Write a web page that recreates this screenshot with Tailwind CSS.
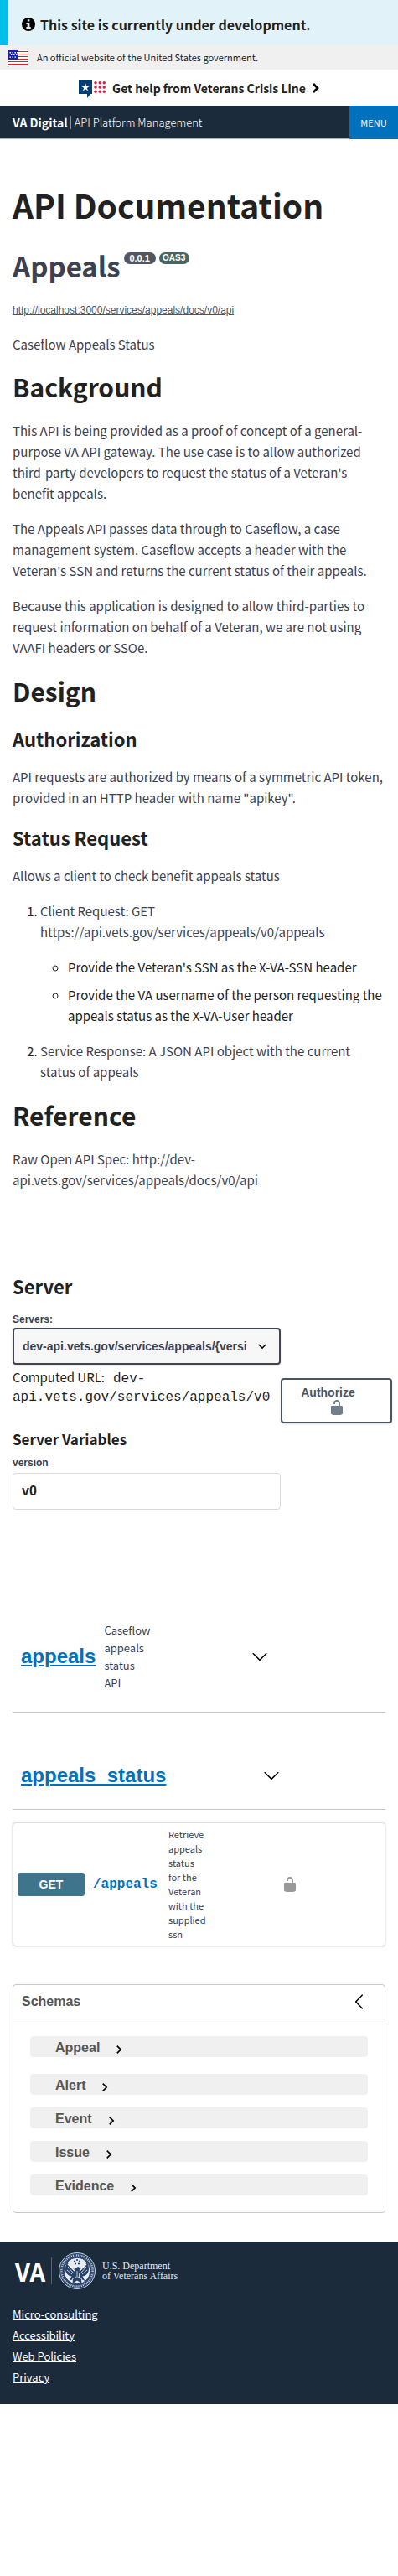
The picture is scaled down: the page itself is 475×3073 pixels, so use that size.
<!DOCTYPE html>
<html lang="en">
<head>
<meta charset="utf-8">
<meta name="viewport" content="width=device-width, initial-scale=1">
<title>API Documentation - VA Digital</title>
<script src="https://cdn.jsdelivr.net/npm/@tailwindcss/browser@4"></script>
</head>
<body class="bg-white font-['Noto_Sans_CJK_JP',sans-serif] text-[15px] leading-[25px] text-[#212121]">

<svg class="hidden" aria-hidden="true">
  <symbol id="unlocked" viewBox="0 0 20 20"><path fill="currentColor" d="M15.8 8H14V5.6C14 2.703 12.665 1 10 1 7.334 1 6 2.703 6 5.6V6h2v-.801C8 3.754 8.797 3 10 3c1.203 0 2 .754 2 2.199V8H4c-.553 0-1 .646-1 1.199V17c0 .549.428 1.139.951 1.307l1.197.387C5.672 18.861 6.55 19 7.1 19h5.8c.549 0 1.428-.139 1.951-.307l1.196-.387c.524-.167.953-.757.953-1.306V9.199C17 8.646 16.352 8 15.8 8z"/></symbol>
  <symbol id="arrow-down" viewBox="0 0 20 20"><path d="M17.418 6.109c.272-.268.709-.268.979 0s.271.701 0 .969l-7.908 7.83c-.27.268-.707.268-.979 0l-7.908-7.83c-.27-.268-.27-.701 0-.969.271-.268.709-.268.979 0L10 13.25l7.418-7.141z"/></symbol>
  <symbol id="chevron" viewBox="0 0 24 24"><path d="M10 6L8.59 7.41 13.17 12l-4.58 4.59L10 18l6-6z"/></symbol>
  <symbol id="star" viewBox="0 0 10 10"><path d="M5 0l1.2 3.6H10L6.9 5.9 8.1 9.6 5 7.3 1.9 9.6l1.2-3.7L0 3.6h3.8z"/></symbol>
</svg>

<div class="flex h-[54px] items-center gap-1.5 border-l-10 border-[#02bfe7] bg-[#e1f3f8] pt-1 pl-4">
  <svg class="size-4 shrink-0" viewBox="0 0 16 16" aria-hidden="true"><circle cx="8" cy="8" r="8"/><path fill="#e1f3f8" d="M6.8 2.2h2.6v2.4H6.8zM5.4 6h4v5h1.3v2H5.4v-2h1.3V8H5.4z"/></svg>
  <p class="text-base font-bold">This site is currently under development.</p>
</div>

<div class="flex h-[29px] items-center gap-2.5 bg-[#f0f0f0] pl-2.5">
  <svg class="h-[18px] w-6 shrink-0" viewBox="0 0 24 18" aria-label="U.S. flag">
    <path fill="#fff" d="M0 0h24v18H0z"/>
    <path fill="#e31c1c" d="M0 1h24v1H0zM0 4h24v1H0zM0 7h24v1H0zM0 10h24v1H0zM0 13h24v1H0zM0 16h24v1.2H0z"/>
    <path fill="#1d1fa8" d="M0 0h12v11H0z"/>
    <g fill="#fff"><path d="M1.5 2h1.5v1.5H1.5zM4.5 2H6v1.5H4.5zM7.5 2H9v1.5H7.5zM10 2h1.2v1.5H10zM3 4.7h1.5v1.4H3zM6 4.7h1.5v1.4H6zM9 4.7h1.5v1.4H9zM1.5 7.4h1.5v1.4H1.5zM4.5 7.4H6v1.4H4.5zM7.5 7.4H9v1.4H7.5z"/></g>
  </svg>
  <p class="text-[11px]">An official website of the United States government.</p>
</div>

<button type="button" class="flex h-[43px] w-full items-center justify-center gap-2 font-bold">
  <svg class="mt-1 h-[21px] w-8" viewBox="0 0 32 21" aria-hidden="true">
    <path fill="#003e73" d="M0 0h16v16h-2l-4 5v-5H0z"/>
    <use href="#star" x="3" y="3" width="10" height="10" fill="#fff"/>
    <g fill="#e31c3d"><circle cx="20" cy="2.7" r="1.7"/><circle cx="25.2" cy="2.7" r="1.7"/><circle cx="30.3" cy="2.7" r="1.7"/><circle cx="20" cy="8" r="1.7"/><circle cx="25.2" cy="8" r="1.7"/><circle cx="30.3" cy="8" r="1.7"/><circle cx="20" cy="13.2" r="1.7"/><circle cx="25.2" cy="13.2" r="1.7"/><circle cx="30.3" cy="13.2" r="1.7"/></g>
  </svg>
  <span class="text-sm">Get help from Veterans Crisis Line</span>
  <svg class="h-3 w-2" viewBox="0 0 8 12" aria-hidden="true"><path fill="none" stroke="#000" stroke-width="2.6" d="M1 1l5 5-5 5"/></svg>
</button>

<header class="flex h-10 bg-[#1b2b3c] text-white">
  <div class="flex flex-1 items-center border-b border-[#aeb0b5] pl-[15px]">
    <a href="#" class="text-sm font-bold">VA Digital</a>
    <span class="mr-1 ml-[3px] h-4 w-px bg-[#8b929b]"></span>
    <span class="text-[13px] font-light">API Platform Management</span>
  </div>
  <button type="button" class="w-[58px] bg-[#0071bc] text-[11px]">MENU</button>
</header>

<main class="px-[15px] pt-[55px]">
  <h1 class="text-[39px] leading-[46px] font-bold">API Documentation</h1>

  <div class="mt-[30px] flex items-start gap-1 text-[#3b4151]">
    <h2 class="text-[33px] leading-10 font-bold">Appeals</h2>
    <span class="mt-1 h-3.5 w-[38px] rounded-full bg-[#4f5862] text-center font-['Liberation_Sans',sans-serif] text-[11px] leading-3.5 font-bold text-white">0.0.1</span>
    <span class="mt-1 h-3.5 w-9 rounded-full bg-[#47665f] text-center font-['Liberation_Sans',sans-serif] text-[10px] leading-3.5 font-bold text-white">OAS3</span>
  </div>
  <a href="#" class="mt-[25px] block font-['Liberation_Sans',sans-serif] text-xs leading-4 text-[#4a5560] underline">http://localhost:3000/services/appeals/docs/v0/api</a>

  <div class="text-[#3b4151]">
    <p class="mt-5">Caseflow Appeals Status</p>
    <h2 class="mt-5 text-3xl leading-9 font-bold text-[#212121]">Background</h2>
    <p class="mt-[22px]">This API is being provided as a proof of concept of a general-purpose VA API gateway. The use case is to allow authorized third-party developers to request the status of a Veteran's benefit appeals.</p>
    <p class="mt-[17px]">The Appeals API passes data through to Caseflow, a case management system. Caseflow accepts a header with the Veteran's SSN and returns the current status of their appeals.</p>
    <p class="mt-[17px]">Because this application is designed to allow third-parties to request information on behalf of a Veteran, we are not using VAAFI headers or SSOe.</p>
    <h2 class="mt-[21px] text-3xl leading-9 font-bold text-[#212121]">Design</h2>
    <h3 class="mt-[25px] text-[22px] leading-7 font-bold text-[#212121]">Authorization</h3>
    <p class="mt-[19px] -mr-1">API requests are authorized by means of a symmetric API token, provided in an HTTP header with name "apikey".</p>
    <h3 class="mt-[21px] text-[22px] leading-7 font-bold text-[#212121]">Status Request</h3>
    <p class="mt-[19px]">Allows a client to check benefit appeals status</p>
    <ol class="mt-[17px] list-decimal pl-[33px] marker:text-[#212121]">
      <li>
        <p>Client Request: GET https://api.vets.gov/services/appeals/v0/appeals</p>
        <ul class="my-[17px] list-[circle] space-y-2 pl-[33px] text-[#212121]">
          <li>Provide the Veteran's SSN as the X-VA-SSN header</li>
          <li>Provide the VA username of the person requesting the appeals status as the X-VA-User header</li>
        </ul>
      </li>
      <li><p>Service Response: A JSON API object with the current status of appeals</p></li>
    </ol>
    <h2 class="mt-[21px] text-3xl leading-9 font-bold text-[#212121]">Reference</h2>
    <p class="mt-[22px]">Raw Open API Spec: http://dev-api.vets.gov/services/appeals/docs/v0/api</p>
  </div>

  <section class="mt-[100px] -mr-2 flex items-center">
    <div class="w-80 shrink-0">
      <h3 class="text-[22px] leading-7 font-bold">Server</h3>
      <label for="servers" class="mt-[18px] block font-['Liberation_Sans',sans-serif] text-xs leading-4 font-bold text-[#3b4151]">Servers:</label>
      <div class="relative mt-0.5">
        <select id="servers" class="block h-11 w-full appearance-none rounded border-2 border-[#41444e] bg-[#f7f7f7] pr-10 pl-2.5 font-['Liberation_Sans',sans-serif] text-sm font-bold text-[#3b4151] shadow-sm">
          <option>dev-api.vets.gov/services/appeals/{version}</option>
        </select>
        <svg class="pointer-events-none absolute top-3 right-3 size-5" viewBox="0 0 20 20" aria-hidden="true"><path d="M13.418 7.859a.695.695 0 0 1 .978 0 .68.68 0 0 1 0 .969l-3.908 3.83a.697.697 0 0 1-.979 0l-3.908-3.83a.68.68 0 0 1 0-.969.695.695 0 0 1 .978 0L10 11l3.418-3.141z"/></svg>
      </div>
      <p class="mt-1 leading-[22px]">Computed URL:<code class="pl-2.5 font-['Liberation_Mono',monospace] text-base leading-none">dev-api.vets.gov/services/appeals/v0</code></p>
      <h4 class="mt-[30px] text-[17px] leading-[22px] font-bold">Server Variables</h4>
      <label for="version" class="mt-[9px] block font-['Liberation_Sans',sans-serif] text-xs leading-4 font-bold text-[#3b4151]">version</label>
      <input id="version" type="text" value="v0" class="mt-1 block h-11 w-full rounded border border-[#d9d9d9] bg-white px-2.5 font-['Liberation_Sans',sans-serif] text-base font-bold">
    </div>
    <button type="button" class="mt-5 flex h-[54px] flex-1 flex-col items-center justify-center rounded border-2 border-[#4a5560] bg-white font-['Liberation_Sans',sans-serif] text-sm leading-4 font-bold text-[#4a5560] shadow-sm">
      <span class="pr-5">Authorize</span>
      <svg class="size-5 text-[#707f8a]" aria-hidden="true"><use href="#unlocked"/></svg>
    </button>
  </section>

  <section class="mt-[109px]">
    <div class="flex h-[133px] items-center border-b border-[#c4c6ce] pl-2.5">
      <div class="flex w-[275px] items-center gap-2.5">
        <a href="#" class="font-['Liberation_Sans',sans-serif] text-2xl leading-7 font-bold text-[#0071bc] underline">appeals</a>
        <p class="w-14 text-[13px] leading-[21px] text-[#3b4151]">Caseflow appeals status API</p>
      </div>
      <button type="button" aria-label="Expand appeals"><svg class="block size-5"><use href="#arrow-down"/></svg></button>
    </div>
    <div class="mt-[35px] flex h-[81px] items-center border-b border-[#c4c6ce] pl-2.5">
      <div class="w-[289px]">
        <a href="#" class="font-['Liberation_Sans',sans-serif] text-2xl leading-7 font-bold text-[#0071bc] underline">appeals_status</a>
      </div>
      <button type="button" aria-label="Collapse appeals_status"><svg class="block size-5"><use href="#arrow-down"/></svg></button>
    </div>
    <div class="mt-[15px] flex items-center gap-2.5 rounded border border-[#d8dcde] p-[5px] shadow-[0_0_3px_rgba(0,0,0,0.19)]">
      <span class="h-7 w-20 rounded-[3px] bg-[#3e758c] text-center font-['Liberation_Sans',sans-serif] text-sm leading-7 font-bold text-white">GET</span>
      <a href="#" class="w-20 font-['Liberation_Mono',monospace] text-base font-bold text-[#0071bc] underline">/appeals</a>
      <p class="w-12 text-[11px] leading-[17px] text-[#3b4151]">Retrieve appeals status for&nbsp;the Veteran with&nbsp;the supplied ssn</p>
      <button type="button" class="ml-[77px] text-[#999]" aria-label="Authorization button, unlocked"><svg class="block size-5"><use href="#unlocked"/></svg></button>
    </div>
  </section>

  <section class="mt-[45px] rounded border border-[#c4c6c9] font-['Liberation_Sans',sans-serif] text-base font-bold text-[#555]">
    <div class="flex h-[41px] items-center justify-between border-b border-[#c4c6c9] pr-5 pl-2.5">
      <h4>Schemas</h4>
      <button type="button" aria-label="Collapse schemas"><svg class="block size-5 rotate-90"><use href="#arrow-down"/></svg></button>
    </div>
    <div class="p-5">
      <button type="button" class="mb-5 flex h-[25px] w-full items-start gap-[13px] rounded bg-[#f0f0f0] pt-0.5 pl-[30px]">Appeal<svg class="mt-1 size-5"><use href="#chevron"/></svg></button>
      <div class="space-y-[15px]">
        <button type="button" class="flex h-[25px] w-full items-start gap-[13px] rounded bg-[#f0f0f0] pt-0.5 pl-[30px]">Alert<svg class="mt-1 size-5"><use href="#chevron"/></svg></button>
        <button type="button" class="flex h-[25px] w-full items-start gap-[13px] rounded bg-[#f0f0f0] pt-0.5 pl-[30px]">Event<svg class="mt-1 size-5"><use href="#chevron"/></svg></button>
        <button type="button" class="flex h-[25px] w-full items-start gap-[13px] rounded bg-[#f0f0f0] pt-0.5 pl-[30px]">Issue<svg class="mt-1 size-5"><use href="#chevron"/></svg></button>
        <button type="button" class="flex h-[25px] w-full items-start gap-[13px] rounded bg-[#f0f0f0] pt-0.5 pl-[30px]">Evidence<svg class="mt-1 size-5"><use href="#chevron"/></svg></button>
      </div>
    </div>
  </section>
</main>

<footer class="mt-[34px] bg-[#1b2b3c] px-[15px] pt-[13px] pb-5 text-white">
  <a href="#" class="flex h-11 items-center pl-[3px]">
    <span class="w-[35px] text-[29px] leading-8 font-bold">VA</span>
    <span class="mx-2 h-8 w-px bg-[#5b6673]"></span>
    <svg class="size-11" viewBox="0 0 44 44" aria-hidden="true">
      <circle cx="22" cy="22" r="21.5" fill="#27426a" stroke="#c9d1db"/>
      <circle cx="22" cy="22" r="18.6" fill="none" stroke="#b4c0cf" stroke-width="2.6" stroke-dasharray="1.2 .9"/>
      <circle cx="22" cy="22" r="15.8" fill="#e9edf2" stroke="#27426a"/>
      <path fill="#27426a" d="M22 17.5c2-1 3.500 .5 3.500 2.500 4-1 6.500-4.500 8-9 3 5 3.500 11 .5 14.500-1.500 2-3.500 3-5.500 3l3 5.500-4.500-2 .5 5-5.500-3.500-5.500 3.500 .5-5-4.500 2 3-5.500c-2 0-4-1-5.500-3-3-3.500-2.500-9.500 .5-14.500 1.500 4.500 4 8 8 9z"/>
      <path fill="none" stroke="#e9edf2" stroke-width=".8" d="M11 17l6 7M10 21l6 5M33 17l-6 7M34 21l-6 5M22 22v9M19.500 24v6M24.500 24v6M16 32l5-3M28 32l-5-3"/>
      <g fill="#27426a"><circle cx="22" cy="9" r="1.100"/><circle cx="19" cy="10.500" r="1.100"/><circle cx="25" cy="10.500" r="1.100"/><circle cx="20" cy="13.500" r="1.100"/><circle cx="24" cy="13.500" r="1.100"/></g>
      <path fill="none" stroke="#fff" stroke-width="1.400" d="M11 14l8 8M33 14l-8 8"/>
    </svg>
    <span class="ml-2 font-['Liberation_Serif',serif] text-xs leading-3 text-[#e4e7ea]">U.S. Department<br>of Veterans Affairs</span>
  </a>
  <ul class="mt-[17px] text-[13px]">
    <li><a href="#" class="underline">Micro-consulting</a></li>
    <li><a href="#" class="underline">Accessibility</a></li>
    <li><a href="#" class="underline">Web Policies</a></li>
    <li><a href="#" class="underline">Privacy</a></li>
  </ul>
</footer>
</body>
</html>
